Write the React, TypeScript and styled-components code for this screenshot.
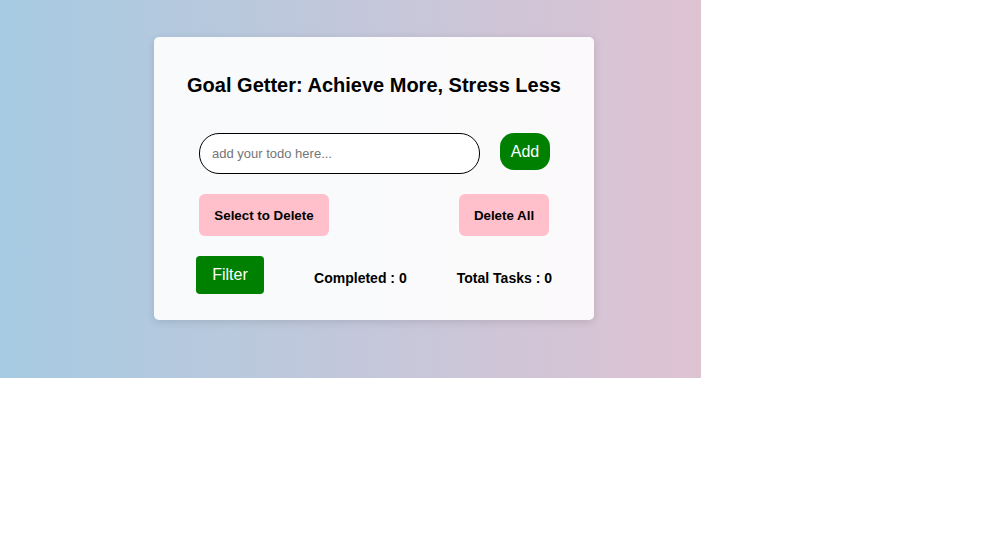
import React from "react";
import styled, { createGlobalStyle } from "styled-components";

const Global = createGlobalStyle`
  html, body { margin: 0; padding: 0; background: #ffffff; }
  body { font-family: "Liberation Sans", Arial, sans-serif; }
  * { box-sizing: border-box; }
`;

const Backdrop = styled.div`
  width: 701px;
  height: 378px;
  background: linear-gradient(to right, #a6cbe2, #dfc3d3);
  padding-top: 37px;
  padding-left: 154px;
`;

const Card = styled.div`
  width: 440px;
  height: 283px;
  background: rgba(255, 255, 255, 0.9);
  border-radius: 5px;
  box-shadow: 0 2px 8px rgba(0, 0, 0, 0.12);
  padding-top: 37px;
  display: flex;
  flex-direction: column;
`;

const Title = styled.h1`
  margin: 0;
  font-size: 20px;
  font-weight: 700;
  line-height: 23px;
  text-align: center;
  color: #000;
`;

const Row = styled.div<{ $top: number; $left: number; $right: number; $align?: string }>`
  display: flex;
  align-items: ${(p) => p.$align ?? "center"};
  justify-content: space-between;
  margin-top: ${(p) => p.$top}px;
  padding: 0 ${(p) => p.$right}px 0 ${(p) => p.$left}px;
`;

const TodoInput = styled.input`
  width: 281px;
  height: 41px;
  border: 1px solid #000;
  border-radius: 20px;
  padding: 0 12px;
  font-family: "Liberation Sans", Arial, sans-serif;
  font-size: 13px;
  background: #fff;
  outline: none;
  &::placeholder { color: #757575; }
`;

const GreenButton = styled.button<{ $w: number; $h: number; $r: number }>`
  width: ${(p) => p.$w}px;
  height: ${(p) => p.$h}px;
  border: none;
  border-radius: ${(p) => p.$r}px;
  background: #008000;
  color: #fff;
  font-family: "Liberation Sans", Arial, sans-serif;
  font-size: 16px;
  padding: 0;
  cursor: pointer;
`;

const PinkButton = styled.button<{ $w: number }>`
  width: ${(p) => p.$w}px;
  height: 42px;
  border: none;
  border-radius: 6px;
  background: #ffc0cb;
  color: #000;
  font-family: "Liberation Sans", Arial, sans-serif;
  font-size: 13.33px;
  font-weight: 700;
  padding: 0;
  cursor: pointer;
`;

const Stat = styled.span`
  font-size: 14px;
  font-weight: 700;
  line-height: 16px;
  margin-top: 6px;
  color: #000;
`;

export default function App() {
  return (
    <>
      <Global />
      <Backdrop>
        <Card>
          <Title>Goal Getter: Achieve More, Stress Less</Title>
          <Row $top={36} $left={45} $right={44} $align="flex-start">
            <TodoInput placeholder="add your todo here..." />
            <GreenButton $w={50} $h={37} $r={14}>
              Add
            </GreenButton>
          </Row>
          <Row $top={20} $left={45} $right={45}>
            <PinkButton $w={130}>Select to Delete</PinkButton>
            <PinkButton $w={90}>Delete All</PinkButton>
          </Row>
          <Row $top={20} $left={42} $right={42}>
            <GreenButton $w={68} $h={38} $r={4}>
              Filter
            </GreenButton>
            <Stat>Completed : 0</Stat>
            <Stat>Total Tasks : 0</Stat>
          </Row>
        </Card>
      </Backdrop>
    </>
  );
}
